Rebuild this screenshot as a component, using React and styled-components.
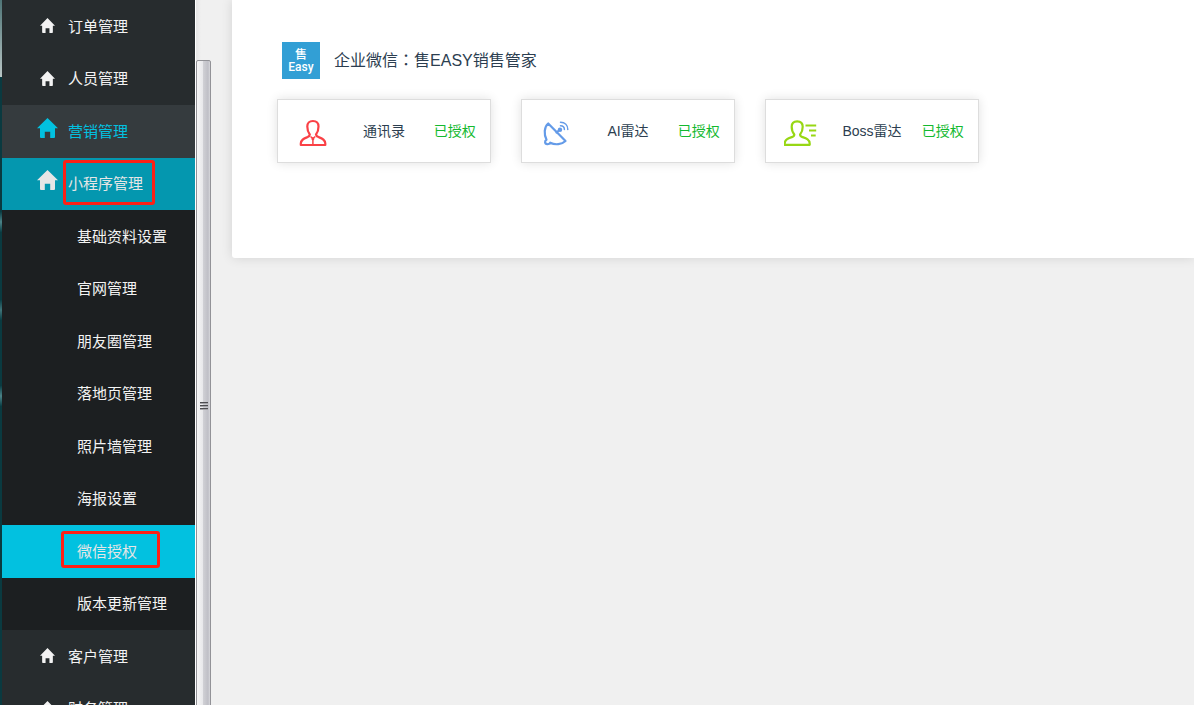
import styled, {createGlobalStyle, css} from 'styled-components';

const GlobalStyle = createGlobalStyle`
  * {
    box-sizing: border-box;
  }

  body {
    margin: 0;
    overflow: hidden;
    background: #f0f0f0;
    color: #2c3e50;
    font-family: "Liberation Sans", "Noto Sans CJK SC", sans-serif;
    font-size: 14px;
  }
`;

const Page = styled.div`
  display: flex;
  height: 100vh;
  overflow: hidden;
`;

const Edge = styled.div`
  flex: none;
  width: 2px;
  background:
    linear-gradient(#0a3e45, #4b8388, #0a3e45) 0 212px / 2px 20px no-repeat,
    linear-gradient(#0a3e45, #3f7479, #0a3e45) 0 300px / 2px 20px no-repeat,
    linear-gradient(#0a3e45, #4b8388, #0a3e45) 0 386px / 2px 20px no-repeat,
    linear-gradient(#4f7577, #b9c6c5) 0 0 / 2px 77px no-repeat,
    #0a3a40;
`;

const Sidebar = styled.nav`
  flex: none;
  width: 193px;
  background: #272c2e;
`;

const Menu = styled.ul`
  margin: 0;
  padding: 0;
  list-style: none;
`;

const SubMenu = styled(Menu)`
  background: #1c1f21;
`;

const MenuItem = styled.li`
  > a {
    height: 52px;
  }

  &:nth-child(odd) > a {
    height: 53px;
  }
`;

const MenuLink = styled.a`
  display: flex;
  align-items: center;
  padding-left: ${({$sub}) => ($sub ? '75px' : '35px')};
  color: #f3f3f3;
  font-size: 15px;
  line-height: 20px;
  text-decoration: none;

  ${({$state}) => $state === 'hover' && css`
    background: #353b3e;
    color: #02c1e0;
  `}

  ${({$state}) => $state === 'open' && css`
    background: #0497af;
    color: #e6e6e6;
  `}

  ${({$state}) => $state === 'active' && css`
    background: #02c1e0;
    color: #e6e6e6;
  `}
`;

const IconSlot = styled.span`
  display: flex;
  justify-content: center;
  width: 21px;
  margin-right: 10px;
  padding-bottom: ${({$large}) => ($large ? '8px' : '2px')};

  svg {
    width: ${({$large}) => ($large ? '21px' : '15px')};
    height: ${({$large}) => ($large ? '20px' : '15px')};
  }
`;

const MenuLabel = styled.span`
  position: relative;
`;

const Marker = styled.span`
  position: absolute;
  inset: ${({$wide}) => ($wide ? '-11px -23px -6px -16px' : '-14px -12px -11px -5px')};
  border: 3px solid #fe2015;
  border-radius: 3px;
`;

const ScrollTrack = styled.div`
  flex: none;
  width: 17px;
  padding: 60px 1px 0;
  background: linear-gradient(90deg, #ffffff 1px, #e5e5e5 1px, #f0f0f0 6px);
`;

const ScrollThumb = styled.div`
  display: flex;
  flex-direction: column;
  align-items: center;
  justify-content: center;
  gap: 1px;
  width: 15px;
  height: calc(100vh - 13px);
  border: 1px solid #929297;
  border-radius: 2px;
  background: linear-gradient(90deg, #f6f6f6, #e8e8eb 45%, #cfcfd4 50%, #bfbfc6 85%, #d8d8dc);
`;

const GripLine = styled.span`
  width: 8px;
  height: 2px;
  border-top: 1px solid #4c4c50;
  background: #a5a5aa;
`;

const Main = styled.main`
  flex: 1;
  min-width: 0;
  padding-left: 20px;
`;

const Panel = styled.section`
  height: 258px;
  padding: 42px 45px 0;
  border-radius: 0 0 0 3px;
  background: #ffffff;
  box-shadow: 0 0 12px rgba(0, 0, 0, 0.12);
`;

const Company = styled.header`
  display: flex;
  align-items: center;
  gap: 14px;
  margin-bottom: 20px;
  padding-left: 5px;
`;

const Logo = styled.div`
  display: flex;
  flex-direction: column;
  align-items: center;
  justify-content: center;
  width: 38px;
  height: 37px;
  background: #329fd5;
  color: #ffffff;
  font-size: 12px;
  font-weight: 500;
  line-height: 12px;
`;

const LogoName = styled.span`
  font-family: Roboto, sans-serif;
  font-size: 12px;
`;

const CompanyName = styled.h1`
  margin: 0;
  padding-bottom: 2px;
  font-size: 16px;
  font-weight: 400;
  line-height: 24px;
`;

/* the TC face centres the full-width colon in its cell */
const Colon = styled.span`
  font-family: "Noto Sans CJK TC", sans-serif;
`;

const Cards = styled.div`
  display: flex;
  flex-wrap: wrap;
  gap: 30px;
`;

const Card = styled.article`
  display: grid;
  grid-template-columns: repeat(3, 1fr);
  align-items: center;
  justify-items: center;
  width: 214px;
  height: 64px;
  border: 1px solid #dddddd;
  background: #ffffff;
  box-shadow: 0 0 10px rgba(0, 0, 0, 0.12);
  line-height: 20px;
  white-space: nowrap;
`;

const Status = styled.span`
  color: #14b92f;
`;

function HomeIcon() {
    return (
        <svg viewBox="0 0 21 20" preserveAspectRatio="none" fill="currentColor" aria-hidden="true">
            <path d="M10.500 0 21 10.200h-3V19q0 1-1 1h-3.800v-6.200h-5.400V20H4q-1 0-1-1v-8.800H0z"/>
        </svg>
    );
}

function ContactIcon() {
    return (
        <svg width="32" height="32" viewBox="0 0 32 32" fill="none" stroke="#fa4146" strokeWidth="2.200" strokeLinejoin="round" aria-hidden="true">
            <path d="M12.800 19.500C11.200 17.500 10.300 15 10.300 11.500 10.300 8 12.300 6 15.900 6s5.600 2 5.600 5.500c0 3.500-.900 6-2.500 8 .200 1.500 1 2 2.500 2.600 3.500 1.400 6.800 2.400 6.800 6.400V30H3.800v-1.500c0-4 3.300-5 6.800-6.400 1.400-.600 2-1.100 2.200-2.600z"/>
            <path d="m13.500 21.500 2.400 2 2.400-2M15.900 23v6.500" strokeWidth="1.500"/>
            <circle cx="15.900" cy="23.700" r="1.500" fill="#fa4146" stroke="none"/>
        </svg>
    );
}

function RadarIcon() {
    return (
        <svg width="32" height="32" viewBox="0 0 32 32" fill="none" stroke="#649be8" strokeWidth="2.200" strokeLinecap="round" strokeLinejoin="round" aria-hidden="true">
            <path d="M7.200 8.500 24.500 26c-3.800 3.600-10.300 4.300-15.300 1.700-1.200 2.200-4.900 2-5.100-.500-.1-1.200.500-2 1.400-2.500C2.800 19.500 3 12 7.200 8.500z"/>
            <path d="m15.500 17.500 3.500-3"/>
            <circle cx="19" cy="14.700" r="2.200" fill="#649be8" stroke="none"/>
            <path d="M19.500 10.700c2.300 0 3.900 1.600 3.900 3.900M19.500 7.300c4.400 0 7.300 3 7.300 7.300" strokeWidth="1.500"/>
        </svg>
    );
}

function BossIcon() {
    return (
        <svg width="34" height="32" viewBox="0 0 34 32" fill="none" stroke="#97d714" strokeWidth="2.200" strokeLinejoin="round" aria-hidden="true">
            <path d="M10.300 19.500C8.600 17.500 7.700 15 7.700 11.700 7.700 8.200 9.600 6.300 13.200 6.300s5.500 1.900 5.500 5.400c0 3.300-.900 5.800-2.600 7.800 0 1.500.900 2.100 2.400 2.600 3.800 1.300 7.200 2.400 7.200 6.400v1.300h-25v-1.300c0-4 3.400-5.100 7.200-6.400 1.500-.500 2.400-1.100 2.400-2.600z"/>
            <path d="M21.500 10.500h10.700M25 15.500h7.200M27 20.500h4.700"/>
        </svg>
    );
}

const subItems = [
    {label: '基础资料设置'},
    {label: '官网管理'},
    {label: '朋友圈管理'},
    {label: '落地页管理'},
    {label: '照片墙管理'},
    {label: '海报设置'},
    {label: '微信授权', state: 'active', marked: true},
    {label: '版本更新管理'},
];

const menuItems = [
    {label: '订单管理'},
    {label: '人员管理'},
    {label: '营销管理', state: 'hover'},
    {label: '小程序管理', state: 'open', marked: true, children: subItems},
    {label: '客户管理'},
    {label: '财务管理'},
];

const apps = [
    {name: '通讯录', Icon: ContactIcon},
    {name: 'AI雷达', Icon: RadarIcon},
    {name: 'Boss雷达', Icon: BossIcon},
];

function MenuEntry({item, sub}) {
    return (
        <MenuItem>
            <MenuLink href="#" $sub={sub} $state={item.state}>
                {!sub && (
                    <IconSlot $large={Boolean(item.state)}>
                        <HomeIcon/>
                    </IconSlot>
                )}
                <MenuLabel>
                    {item.label}
                    {item.marked && <Marker $wide={sub}/>}
                </MenuLabel>
            </MenuLink>
            {item.children && (
                <SubMenu>
                    {item.children.map((child) => (
                        <MenuEntry key={child.label} item={child} sub/>
                    ))}
                </SubMenu>
            )}
        </MenuItem>
    );
}

export default function App() {
    return (
        <Page>
            <GlobalStyle/>
            <Edge/>
            <Sidebar>
                <Menu>
                    {menuItems.map((item) => (
                        <MenuEntry key={item.label} item={item}/>
                    ))}
                </Menu>
            </Sidebar>
            <ScrollTrack>
                <ScrollThumb>
                    <GripLine/>
                    <GripLine/>
                    <GripLine/>
                </ScrollThumb>
            </ScrollTrack>
            <Main>
                <Panel>
                    <Company>
                        <Logo>
                            <span>售</span>
                            <LogoName>Easy</LogoName>
                        </Logo>
                        <CompanyName>
                            企业微信<Colon>：</Colon>售EASY销售管家
                        </CompanyName>
                    </Company>
                    <Cards>
                        {apps.map(({name, Icon}) => (
                            <Card key={name}>
                                <Icon/>
                                <span>{name}</span>
                                <Status>已授权</Status>
                            </Card>
                        ))}
                    </Cards>
                </Panel>
            </Main>
        </Page>
    );
}
